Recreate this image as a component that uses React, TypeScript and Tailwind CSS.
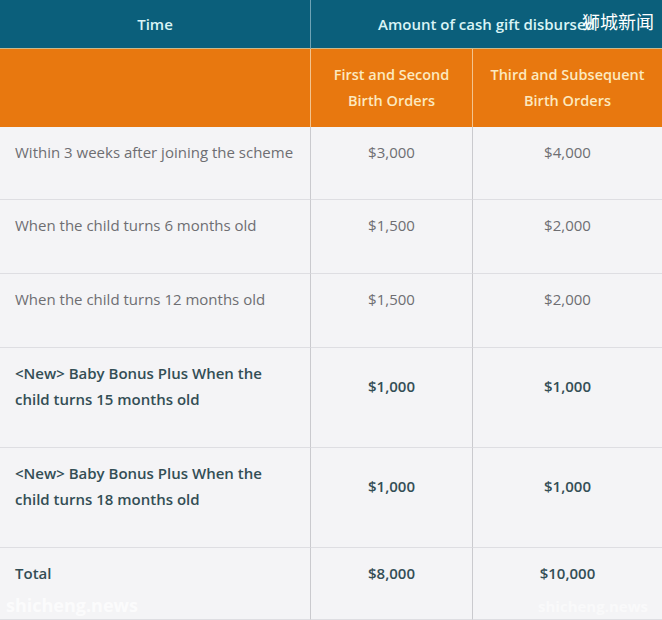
import React from 'react';

const rows = [
  { time: 'Within 3 weeks after joining the scheme', a: '$3,000', b: '$4,000', h: 'h-[73px]', bold: false, two: false },
  { time: 'When the child turns 6 months old', a: '$1,500', b: '$2,000', h: 'h-[74px]', bold: false, two: false },
  { time: 'When the child turns 12 months old', a: '$1,500', b: '$2,000', h: 'h-[74px]', bold: false, two: false },
  { time: '<New> Baby Bonus Plus When the child turns 15 months old', a: '$1,000', b: '$1,000', h: 'h-[100px]', bold: true, two: true },
  { time: '<New> Baby Bonus Plus When the child turns 18 months old', a: '$1,000', b: '$1,000', h: 'h-[100px]', bold: true, two: true },
  { time: 'Total', a: '$8,000', b: '$10,000', h: 'h-[72px]', bold: true, two: false },
];

export default function App() {
  return (
    <div className="relative w-[662px] h-[620px] overflow-hidden bg-[#f4f4f6] font-['Open_Sans',sans-serif]">
      <div className="grid grid-cols-[311px_162px_189px]">
        <div className="h-[49px] bg-[#0b5f7b] flex items-center justify-center text-[15px] font-semibold text-[#d9f4f6] border-r border-[#6fa3b5] border-b border-b-[#c9b98a]">
          Time
        </div>
        <div className="col-span-2 h-[49px] bg-[#0b5f7b] flex items-center justify-center text-[15px] font-semibold text-[#d9f4f6] border-b border-[#c9b98a]">
          Amount of cash gift disbursed
        </div>

        <div className="h-[78px] bg-[#e8780f] border-r border-[#f3c48e]" />
        <div className="h-[78px] bg-[#e8780f] border-r border-[#f3c48e] flex items-center justify-center text-center text-[14.5px] leading-[26px] font-semibold text-[#fce9bf]">
          First and Second<br />Birth Orders
        </div>
        <div className="h-[78px] bg-[#e8780f] flex items-center justify-center text-center text-[14.5px] leading-[26px] font-semibold text-[#fce9bf]">
          Third and Subsequent<br />Birth Orders
        </div>

        {rows.map((r, i) => (
          <React.Fragment key={i}>
            <div className={`${r.h} border-b border-[#dedee2] border-r border-r-[#cacace] pl-[15px] pr-[6px] pt-[12px] text-[15px] leading-[26px] ${r.bold ? 'font-semibold text-[#334e55]' : 'text-[#6e6e72]'}`}>
              {r.two ? (
                <span className="block pr-[40px]">{r.time}</span>
              ) : (
                r.time
              )}
            </div>
            <div className={`${r.h} border-b border-[#dedee2] border-r border-r-[#cacace] ${r.two ? 'pt-[25px]' : 'pt-[12px]'} text-center text-[15px] leading-[26px] ${r.bold ? 'font-semibold text-[#334e55]' : 'text-[#6e6e72]'}`}>
              {r.a}
            </div>
            <div className={`${r.h} border-b border-[#dedee2] ${r.two ? 'pt-[25px]' : 'pt-[12px]'} text-center text-[15px] leading-[26px] ${r.bold ? 'font-semibold text-[#334e55]' : 'text-[#6e6e72]'}`}>
              {r.b}
            </div>
          </React.Fragment>
        ))}
      </div>

      <div className="absolute top-[9px] right-[8px] text-[18px] leading-[24px] text-white font-['Noto_Sans_CJK_SC',sans-serif]">
        狮城新闻
      </div>
      <div className="absolute left-[6px] bottom-[1px] text-[18px] font-bold text-white/70">
        shicheng.news
      </div>
      <div className="absolute right-[14px] bottom-[3px] text-[15px] font-bold text-white/50">
        shicheng.news
      </div>
    </div>
  );
}
